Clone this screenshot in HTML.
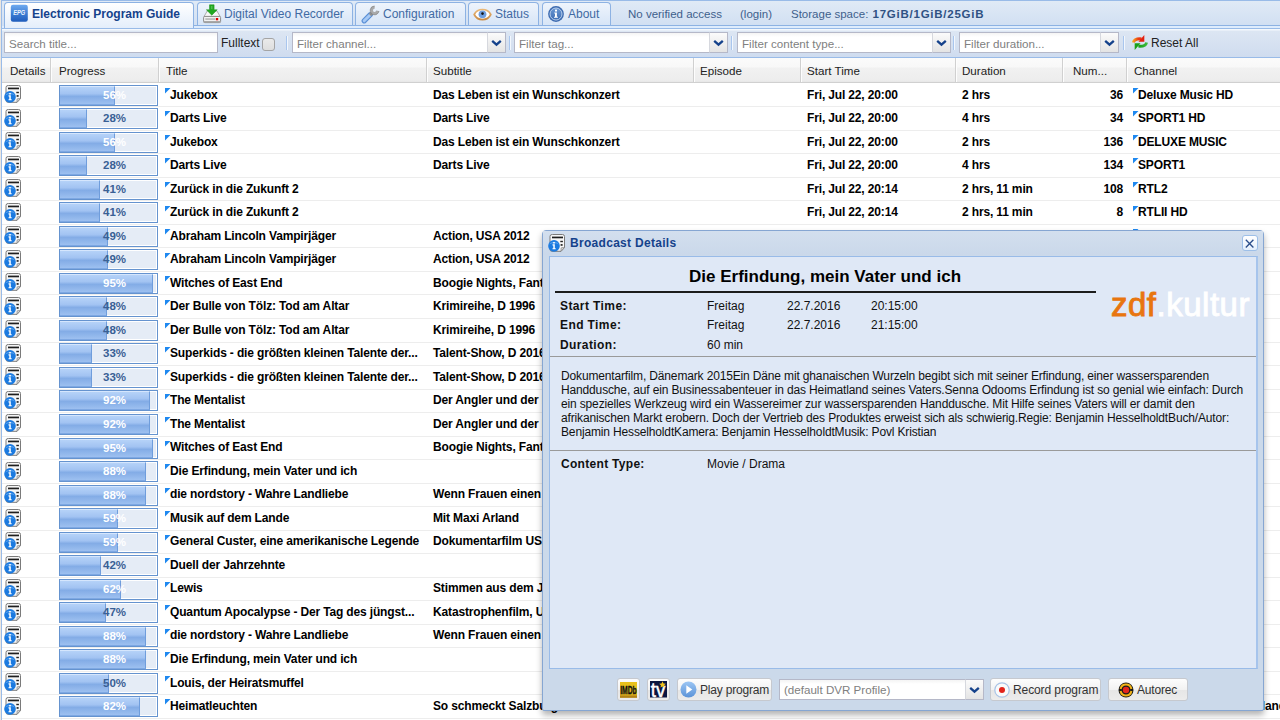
<!DOCTYPE html><html><head><meta charset="utf-8"><style>
*{box-sizing:border-box}
html,body{margin:0;padding:0;width:1280px;height:720px;overflow:hidden;background:#fff;font-family:"Liberation Sans",sans-serif;position:relative}
.a{position:absolute}
.t{position:absolute;white-space:nowrap;line-height:14px}
.tri{position:absolute}
#strip{left:0;top:0;width:1280px;height:29px;background:linear-gradient(#e0eaf6,#cfdef2);border-top:1px solid #99bbe8}
.tab{position:absolute;top:1px;height:23px;border:1px solid #8db2e3;border-bottom:none;border-radius:4px 4px 0 0;background:linear-gradient(#eef4fc,#d7e5f7);color:#416aa3;font-size:12px}
.tab.act{top:1px;height:26px;background:linear-gradient(#ffffff,#e4eefb);color:#15428b;font-weight:bold;z-index:2}
.tab .t{top:4px}
.tab svg{position:absolute}
#tbar{left:0;top:29px;width:1280px;height:29px;background:linear-gradient(#f4f8fd 0,#f4f8fd 1px,#dce6f3 2px,#cfdcef 100%);border-bottom:1px solid #99bbe8}
.fld{position:absolute;top:3px;height:21px;border:1px solid #b5b8c8;background:linear-gradient(#f4f4f4 0,#fff 4px);color:#808080;font-size:12px}
.fld .t{left:4px;top:4px;font-size:11.6px}
.trig{position:absolute;right:-1px;top:-1px;width:19px;height:21px;border:1px solid #b5b8c8;border-left-color:#d6d8de;background:linear-gradient(#fbfbfb,#e4e4e4);}
.trig svg{position:absolute;left:3px;top:6px}
.sep{position:absolute;top:7px;width:2px;height:14px;border-left:1px solid #a9c6ee;border-right:1px solid #f2f7fd}
#hdr{left:0;top:58px;width:1280px;height:25px;background:linear-gradient(#fbfbfb 0,#f8f8f8 9px,#f1f1f1 10px,#ededed 22px,#e6e6e6 24px);border-bottom:1px solid #d0d0d0}
.hs{position:absolute;top:0;width:1px;height:24px;background:#d0d0d0;box-shadow:1px 0 0 #fdfdfd}
.ht{position:absolute;top:10px;font-size:11.6px;color:#222;white-space:nowrap;line-height:14px}
.row{position:absolute;left:2px;width:1278px;border-bottom:1px solid #ededed}
.c{position:absolute;white-space:nowrap;font-size:12px;font-weight:bold;color:#000;line-height:14px;letter-spacing:-.15px}
.pb{position:absolute;left:59px;width:99px;height:21px;border:1px solid #6593cf;background:linear-gradient(#fff,#e6edf6);}
.pb .in{position:absolute;left:0;top:0;bottom:0;right:0;border:1px solid #fff;background:#e5ecf6}
.pb .fill{position:absolute;left:0;top:0;height:19px;background:linear-gradient(#b5d2f8 0,#a2c3f2 40%,#83ace6 55%,#9dc0f0 100%);border-top:1px solid #d5e6fd;border-right:1px solid #6f9ddc;border-bottom:1px solid #7ea8e3}
.pb .pt{position:absolute;left:6px;width:97px;top:2px;text-align:center;font-size:11.5px;font-weight:bold;line-height:14px}
</style></head><body>
<div class="a" style="left:0;top:0;width:1px;height:720px;background:#ebe6e0;z-index:5"></div><div class="a" style="left:1px;top:0;width:1px;height:720px;background:#99bbe8;z-index:5"></div>

<div id="strip" class="a">
<div class="a" style="left:4px;top:24px;width:1276px;height:1px;background:#8db2e3"></div>
<div class="a" style="left:0;top:25px;width:1280px;height:2px;background:#deecfd"></div>
<div class="a" style="left:0;top:27px;width:1280px;height:1px;background:#99bbe8"></div>
<div class="tab act" style="left:4px;width:190px"><svg style="left:5px;top:1px" width="18" height="18" viewBox="0 0 18 18"><defs><linearGradient id="ge" x1="0" y1="0" x2="0" y2="1"><stop offset="0" stop-color="#6eaaf0"/><stop offset=".55" stop-color="#3b7bd2"/><stop offset="1" stop-color="#1f5cbc"/></linearGradient></defs><rect x="0.8" y="0.8" width="17" height="17" rx="2.2" fill="url(#ge)"/><text x="9.3" y="10.6" font-family="Liberation Sans" font-size="6.6" font-weight="bold" font-style="italic" fill="#fff" fill-opacity=".92" text-anchor="middle" textLength="12" lengthAdjust="spacingAndGlyphs">EPG</text></svg><div class="t" style="left:27px">Electronic Program Guide</div></div>
<div class="tab" style="left:197px;width:156px"><svg style="left:5px;top:1px" width="19" height="20" viewBox="0 0 19 20"><path d="M4.3 6.9h9.6l3.3 5.6H1z" fill="#f7f7f7" stroke="#9a9a9a" stroke-width=".8"/><rect x="0.6" y="12.4" width="17" height="6.2" rx="1.2" fill="#f2f2f2" stroke="#8c8c8c" stroke-width="1"/><rect x="0.6" y="17" width="17" height="1.6" fill="#a8a8a8"/><rect x="2.3" y="14.4" width="10" height="1.3" fill="#a9a9a9"/><rect x="12.9" y="14" width="2.3" height="2.3" fill="#e30000"/><path d="M6.5 0.8h4.6v5h3.1L8.8 11.2 3.4 5.8h3.1z" fill="#22a822" stroke="#1a8f1a" stroke-width=".5"/><rect x="8.2" y="2" width="1.2" height="3" fill="#7fd47f" opacity=".6"/></svg><div class="t" style="left:26px">Digital Video Recorder</div></div>
<div class="tab" style="left:355px;width:111px"><svg style="left:5px;top:2px" width="20" height="19" viewBox="0 0 20 19"><path d="M3.2 15.8L9.3 9.7" stroke="#5a8fd6" stroke-width="5.2" stroke-linecap="round"/><path d="M3.2 15.8L9.3 9.7" stroke="#a6c9f5" stroke-width="3" stroke-linecap="round"/><path d="M9 10l2.6-2.6" stroke="#8e8e8e" stroke-width="3.4"/><circle cx="13.6" cy="5.4" r="3" fill="none" stroke="#a9a9a9" stroke-width="2.8" stroke-dasharray="13.4 5.5" transform="rotate(8 13.6 5.4)"/><circle cx="13.6" cy="5.4" r="4.4" fill="none" stroke="#7c7c7c" stroke-width=".6" stroke-dasharray="19.5 8.2" transform="rotate(8 13.6 5.4)"/></svg><div class="t" style="left:27px">Configuration</div></div>
<div class="tab" style="left:468px;width:71px"><svg style="left:4px;top:3px" width="19" height="16" viewBox="0 0 19 16"><defs><linearGradient id="gy" x1="0" y1="0" x2="0" y2="1"><stop offset="0" stop-color="#e9b878"/><stop offset="1" stop-color="#c98b45"/></linearGradient></defs><path d="M1.2 8.5C4.5 1.8 14.5 1.8 17.8 8.5 14.5 15.2 4.5 15.2 1.2 8.5z" fill="#fff" stroke="url(#gy)" stroke-width="1.7"/><circle cx="9.5" cy="8.3" r="3.9" fill="#6f9fdf"/><circle cx="9.5" cy="7.6" r="1.3" fill="#111"/></svg><div class="t" style="left:26px">Status</div></div>
<div class="tab" style="left:542px;width:69px"><svg style="left:4px;top:2px" width="18" height="18" viewBox="0 0 18 18"><defs><linearGradient id="ga" x1="0" y1="0" x2="0" y2="1"><stop offset="0" stop-color="#6a98d4"/><stop offset="1" stop-color="#3f6db2"/></linearGradient></defs><circle cx="9" cy="9" r="7.9" fill="#3d6bb0"/><circle cx="9" cy="9" r="6" fill="url(#ga)" stroke="#c5d8f0" stroke-width=".9"/><rect x="8" y="4.6" width="2" height="1.9" fill="#fff"/><path d="M7.3 7.4h2.6v4.3h1v1.1H7v-1.1h1v-3.2h-.7z" fill="#fff"/></svg><div class="t" style="left:25px">About</div></div>
<div class="t" style="left:628px;top:6px;font-size:11.5px;color:#3e5f8c">No verified access</div>
<div class="t" style="left:740px;top:6px;font-size:11.5px;color:#3e5f8c">(login)</div>
<div class="t" style="left:791px;top:6px;font-size:11.5px;color:#3e5f8c">Storage space: <b style="color:#2f5283;letter-spacing:.75px;margin-left:1px">17GiB/1GiB/25GiB</b></div>
</div>
<div id="tbar" class="a">
<div class="fld" style="left:4px;width:214px"><div class="t">Search title...</div></div>
<div class="t" style="left:221px;top:7px;font-size:12px;color:#222">Fulltext</div>
<div class="a" style="left:262px;top:9px;width:13px;height:13px;border:1px solid #a4a4a4;border-radius:3px;background:linear-gradient(#eaeaea,#dedede)"></div>
<div class="sep" style="left:286px"></div>
<div class="fld" style="left:292px;width:214px;top:3px"><div class="t">Filter channel...</div><div class="trig"><svg width="11" height="8" viewBox="0 0 11 8"><path d="M1.2 1.8l4.3 3.9 4.3-3.9" fill="none" stroke="#15428b" stroke-width="2.3"/></svg></div></div>
<div class="sep" style="left:509px"></div>
<div class="fld" style="left:514px;width:214px;top:3px"><div class="t">Filter tag...</div><div class="trig"><svg width="11" height="8" viewBox="0 0 11 8"><path d="M1.2 1.8l4.3 3.9 4.3-3.9" fill="none" stroke="#15428b" stroke-width="2.3"/></svg></div></div>
<div class="sep" style="left:731px"></div>
<div class="fld" style="left:737px;width:214px;top:3px"><div class="t">Filter content type...</div><div class="trig"><svg width="11" height="8" viewBox="0 0 11 8"><path d="M1.2 1.8l4.3 3.9 4.3-3.9" fill="none" stroke="#15428b" stroke-width="2.3"/></svg></div></div>
<div class="sep" style="left:953px"></div>
<div class="fld" style="left:959px;width:160px;top:3px"><div class="t">Filter duration...</div><div class="trig"><svg width="11" height="8" viewBox="0 0 11 8"><path d="M1.2 1.8l4.3 3.9 4.3-3.9" fill="none" stroke="#15428b" stroke-width="2.3"/></svg></div></div>
<div class="sep" style="left:1123px"></div>
<svg class="a" style="left:1132px;top:5px" width="16" height="17" viewBox="0 0 16 17"><defs><linearGradient id="gr" x1="0" y1="0" x2="1" y2="0"><stop offset="0" stop-color="#f6a020"/><stop offset=".6" stop-color="#ea3a12"/></linearGradient><linearGradient id="gg" x1="0" y1="0" x2="1" y2="0"><stop offset="0" stop-color="#17a017"/><stop offset="1" stop-color="#3cb83c"/></linearGradient></defs><path d="M1.4 8.6Q2.2 4.3 9.6 4.8" fill="none" stroke="url(#gr)" stroke-width="2.8"/><path d="M12.3 1V7.7H6.5z" fill="#e42010"/><path d="M14.6 8.4Q13.8 12.7 6.4 12.2" fill="none" stroke="url(#gg)" stroke-width="2.8"/><path d="M2.7 16V9.3H8.5z" fill="#19a019"/></svg>
<div class="t" style="left:1151px;top:7px;font-size:12px;color:#222">Reset All</div>
</div>
<div id="hdr" class="a">
<div class="hs" style="left:50px"></div>
<div class="hs" style="left:158px"></div>
<div class="hs" style="left:426px"></div>
<div class="hs" style="left:693px"></div>
<div class="hs" style="left:800px"></div>
<div class="hs" style="left:955px"></div>
<div class="hs" style="left:1062px"></div>
<div class="hs" style="left:1126px"></div>
<div class="ht" style="left:10px;top:6px">Details</div>
<div class="ht" style="left:59px;top:6px">Progress</div>
<div class="ht" style="left:166px;top:6px">Title</div>
<div class="ht" style="left:433px;top:6px">Subtitle</div>
<div class="ht" style="left:700px;top:6px">Episode</div>
<div class="ht" style="left:807px;top:6px">Start Time</div>
<div class="ht" style="left:962px;top:6px">Duration</div>
<div class="ht" style="left:1073px;top:6px">Num...</div>
<div class="ht" style="left:1134px;top:6px">Channel</div>
</div>
<div class="a" style="left:2px;top:106px;width:1278px;height:1px;background:#ededed"></div>
<div class="a" style="left:4px;top:85px"><svg width="18" height="18" viewBox="0 0 18 18"><path d="M4.5 0.5h10a2 2 0 0 1 2 2v11l-3.5 3.8h-9a2 2 0 0 1-2-2v-12.8a2 2 0 0 1 2-2z" fill="#f6f6f6" stroke="#7a7a7a"/><path d="M16.5 13.5l-3.5 3.8v-2.6a1.2 1.2 0 0 1 1.2-1.2z" fill="#cfcfcf" stroke="#7a7a7a" stroke-width=".6"/><rect x="4" y="2.6" width="11" height="1.7" fill="#1e1e1e"/><rect x="12.3" y="6.8" width="2.6" height="1.4" fill="#222"/><rect x="12.6" y="10.1" width="2" height="1.7" fill="#222"/><circle cx="6" cy="11.9" r="5.8" fill="#1b7ae0"/><path d="M1.3 10.5a5 4 0 0 1 9.4 0a6 3 0 0 0-9.4 0z" fill="#7ab8f7" opacity=".6"/><rect x="5.2" y="8" width="1.6" height="1.5" fill="#fff"/><path d="M4.5 10.3h2.3v3.9h0.9v1h-3.2v-1h0.8v-2.8h-0.8z" fill="#fff"/></svg></div>
<div class="pb" style="top:85px"><div class="in"></div><div class="fill" style="width:55px"></div><div class="pt" style="color:#fff">56%</div></div>
<svg class="tri" style="left:165px;top:88px" width="6" height="6"><path d="M0 0H5.5L0 5.5Z" fill="#1e88f0"/></svg>
<div class="c" style="left:170px;top:88px">Jukebox</div>
<div class="c" style="left:433px;top:88px">Das Leben ist ein Wunschkonzert</div>
<div class="c" style="left:807px;top:88px">Fri, Jul 22, 20:00</div>
<div class="c" style="left:962px;top:88px">2 hrs</div>
<div class="c" style="right:157px;top:88px">36</div>
<svg class="tri" style="left:1133px;top:88px" width="6" height="6"><path d="M0 0H5.5L0 5.5Z" fill="#1e88f0"/></svg>
<div class="c" style="left:1138px;top:88px">Deluxe Music HD</div>
<div class="a" style="left:2px;top:130px;width:1278px;height:1px;background:#ededed"></div>
<div class="a" style="left:4px;top:109px"><svg width="18" height="18" viewBox="0 0 18 18"><path d="M4.5 0.5h10a2 2 0 0 1 2 2v11l-3.5 3.8h-9a2 2 0 0 1-2-2v-12.8a2 2 0 0 1 2-2z" fill="#f6f6f6" stroke="#7a7a7a"/><path d="M16.5 13.5l-3.5 3.8v-2.6a1.2 1.2 0 0 1 1.2-1.2z" fill="#cfcfcf" stroke="#7a7a7a" stroke-width=".6"/><rect x="4" y="2.6" width="11" height="1.7" fill="#1e1e1e"/><rect x="12.3" y="6.8" width="2.6" height="1.4" fill="#222"/><rect x="12.6" y="10.1" width="2" height="1.7" fill="#222"/><circle cx="6" cy="11.9" r="5.8" fill="#1b7ae0"/><path d="M1.3 10.5a5 4 0 0 1 9.4 0a6 3 0 0 0-9.4 0z" fill="#7ab8f7" opacity=".6"/><rect x="5.2" y="8" width="1.6" height="1.5" fill="#fff"/><path d="M4.5 10.3h2.3v3.9h0.9v1h-3.2v-1h0.8v-2.8h-0.8z" fill="#fff"/></svg></div>
<div class="pb" style="top:108px"><div class="in"></div><div class="fill" style="width:27px"></div><div class="pt" style="color:#396095">28%</div></div>
<svg class="tri" style="left:165px;top:111px" width="6" height="6"><path d="M0 0H5.5L0 5.5Z" fill="#1e88f0"/></svg>
<div class="c" style="left:170px;top:111px">Darts Live</div>
<div class="c" style="left:433px;top:111px">Darts Live</div>
<div class="c" style="left:807px;top:111px">Fri, Jul 22, 20:00</div>
<div class="c" style="left:962px;top:111px">4 hrs</div>
<div class="c" style="right:157px;top:111px">34</div>
<svg class="tri" style="left:1133px;top:111px" width="6" height="6"><path d="M0 0H5.5L0 5.5Z" fill="#1e88f0"/></svg>
<div class="c" style="left:1138px;top:111px">SPORT1 HD</div>
<div class="a" style="left:2px;top:153px;width:1278px;height:1px;background:#ededed"></div>
<div class="a" style="left:4px;top:132px"><svg width="18" height="18" viewBox="0 0 18 18"><path d="M4.5 0.5h10a2 2 0 0 1 2 2v11l-3.5 3.8h-9a2 2 0 0 1-2-2v-12.8a2 2 0 0 1 2-2z" fill="#f6f6f6" stroke="#7a7a7a"/><path d="M16.5 13.5l-3.5 3.8v-2.6a1.2 1.2 0 0 1 1.2-1.2z" fill="#cfcfcf" stroke="#7a7a7a" stroke-width=".6"/><rect x="4" y="2.6" width="11" height="1.7" fill="#1e1e1e"/><rect x="12.3" y="6.8" width="2.6" height="1.4" fill="#222"/><rect x="12.6" y="10.1" width="2" height="1.7" fill="#222"/><circle cx="6" cy="11.9" r="5.8" fill="#1b7ae0"/><path d="M1.3 10.5a5 4 0 0 1 9.4 0a6 3 0 0 0-9.4 0z" fill="#7ab8f7" opacity=".6"/><rect x="5.2" y="8" width="1.6" height="1.5" fill="#fff"/><path d="M4.5 10.3h2.3v3.9h0.9v1h-3.2v-1h0.8v-2.8h-0.8z" fill="#fff"/></svg></div>
<div class="pb" style="top:132px"><div class="in"></div><div class="fill" style="width:55px"></div><div class="pt" style="color:#fff">56%</div></div>
<svg class="tri" style="left:165px;top:135px" width="6" height="6"><path d="M0 0H5.5L0 5.5Z" fill="#1e88f0"/></svg>
<div class="c" style="left:170px;top:135px">Jukebox</div>
<div class="c" style="left:433px;top:135px">Das Leben ist ein Wunschkonzert</div>
<div class="c" style="left:807px;top:135px">Fri, Jul 22, 20:00</div>
<div class="c" style="left:962px;top:135px">2 hrs</div>
<div class="c" style="right:157px;top:135px">136</div>
<svg class="tri" style="left:1133px;top:135px" width="6" height="6"><path d="M0 0H5.5L0 5.5Z" fill="#1e88f0"/></svg>
<div class="c" style="left:1138px;top:135px">DELUXE MUSIC</div>
<div class="a" style="left:2px;top:177px;width:1278px;height:1px;background:#ededed"></div>
<div class="a" style="left:4px;top:156px"><svg width="18" height="18" viewBox="0 0 18 18"><path d="M4.5 0.5h10a2 2 0 0 1 2 2v11l-3.5 3.8h-9a2 2 0 0 1-2-2v-12.8a2 2 0 0 1 2-2z" fill="#f6f6f6" stroke="#7a7a7a"/><path d="M16.5 13.5l-3.5 3.8v-2.6a1.2 1.2 0 0 1 1.2-1.2z" fill="#cfcfcf" stroke="#7a7a7a" stroke-width=".6"/><rect x="4" y="2.6" width="11" height="1.7" fill="#1e1e1e"/><rect x="12.3" y="6.8" width="2.6" height="1.4" fill="#222"/><rect x="12.6" y="10.1" width="2" height="1.7" fill="#222"/><circle cx="6" cy="11.9" r="5.8" fill="#1b7ae0"/><path d="M1.3 10.5a5 4 0 0 1 9.4 0a6 3 0 0 0-9.4 0z" fill="#7ab8f7" opacity=".6"/><rect x="5.2" y="8" width="1.6" height="1.5" fill="#fff"/><path d="M4.5 10.3h2.3v3.9h0.9v1h-3.2v-1h0.8v-2.8h-0.8z" fill="#fff"/></svg></div>
<div class="pb" style="top:155px"><div class="in"></div><div class="fill" style="width:27px"></div><div class="pt" style="color:#396095">28%</div></div>
<svg class="tri" style="left:165px;top:158px" width="6" height="6"><path d="M0 0H5.5L0 5.5Z" fill="#1e88f0"/></svg>
<div class="c" style="left:170px;top:158px">Darts Live</div>
<div class="c" style="left:433px;top:158px">Darts Live</div>
<div class="c" style="left:807px;top:158px">Fri, Jul 22, 20:00</div>
<div class="c" style="left:962px;top:158px">4 hrs</div>
<div class="c" style="right:157px;top:158px">134</div>
<svg class="tri" style="left:1133px;top:158px" width="6" height="6"><path d="M0 0H5.5L0 5.5Z" fill="#1e88f0"/></svg>
<div class="c" style="left:1138px;top:158px">SPORT1</div>
<div class="a" style="left:2px;top:200px;width:1278px;height:1px;background:#ededed"></div>
<div class="a" style="left:4px;top:179px"><svg width="18" height="18" viewBox="0 0 18 18"><path d="M4.5 0.5h10a2 2 0 0 1 2 2v11l-3.5 3.8h-9a2 2 0 0 1-2-2v-12.8a2 2 0 0 1 2-2z" fill="#f6f6f6" stroke="#7a7a7a"/><path d="M16.5 13.5l-3.5 3.8v-2.6a1.2 1.2 0 0 1 1.2-1.2z" fill="#cfcfcf" stroke="#7a7a7a" stroke-width=".6"/><rect x="4" y="2.6" width="11" height="1.7" fill="#1e1e1e"/><rect x="12.3" y="6.8" width="2.6" height="1.4" fill="#222"/><rect x="12.6" y="10.1" width="2" height="1.7" fill="#222"/><circle cx="6" cy="11.9" r="5.8" fill="#1b7ae0"/><path d="M1.3 10.5a5 4 0 0 1 9.4 0a6 3 0 0 0-9.4 0z" fill="#7ab8f7" opacity=".6"/><rect x="5.2" y="8" width="1.6" height="1.5" fill="#fff"/><path d="M4.5 10.3h2.3v3.9h0.9v1h-3.2v-1h0.8v-2.8h-0.8z" fill="#fff"/></svg></div>
<div class="pb" style="top:179px"><div class="in"></div><div class="fill" style="width:40px"></div><div class="pt" style="color:#396095">41%</div></div>
<svg class="tri" style="left:165px;top:182px" width="6" height="6"><path d="M0 0H5.5L0 5.5Z" fill="#1e88f0"/></svg>
<div class="c" style="left:170px;top:182px">Zurück in die Zukunft 2</div>
<div class="c" style="left:807px;top:182px">Fri, Jul 22, 20:14</div>
<div class="c" style="left:962px;top:182px">2 hrs, 11 min</div>
<div class="c" style="right:157px;top:182px">108</div>
<svg class="tri" style="left:1133px;top:182px" width="6" height="6"><path d="M0 0H5.5L0 5.5Z" fill="#1e88f0"/></svg>
<div class="c" style="left:1138px;top:182px">RTL2</div>
<div class="a" style="left:2px;top:224px;width:1278px;height:1px;background:#ededed"></div>
<div class="a" style="left:4px;top:203px"><svg width="18" height="18" viewBox="0 0 18 18"><path d="M4.5 0.5h10a2 2 0 0 1 2 2v11l-3.5 3.8h-9a2 2 0 0 1-2-2v-12.8a2 2 0 0 1 2-2z" fill="#f6f6f6" stroke="#7a7a7a"/><path d="M16.5 13.5l-3.5 3.8v-2.6a1.2 1.2 0 0 1 1.2-1.2z" fill="#cfcfcf" stroke="#7a7a7a" stroke-width=".6"/><rect x="4" y="2.6" width="11" height="1.7" fill="#1e1e1e"/><rect x="12.3" y="6.8" width="2.6" height="1.4" fill="#222"/><rect x="12.6" y="10.1" width="2" height="1.7" fill="#222"/><circle cx="6" cy="11.9" r="5.8" fill="#1b7ae0"/><path d="M1.3 10.5a5 4 0 0 1 9.4 0a6 3 0 0 0-9.4 0z" fill="#7ab8f7" opacity=".6"/><rect x="5.2" y="8" width="1.6" height="1.5" fill="#fff"/><path d="M4.5 10.3h2.3v3.9h0.9v1h-3.2v-1h0.8v-2.8h-0.8z" fill="#fff"/></svg></div>
<div class="pb" style="top:202px"><div class="in"></div><div class="fill" style="width:40px"></div><div class="pt" style="color:#396095">41%</div></div>
<svg class="tri" style="left:165px;top:206px" width="6" height="6"><path d="M0 0H5.5L0 5.5Z" fill="#1e88f0"/></svg>
<div class="c" style="left:170px;top:205px">Zurück in die Zukunft 2</div>
<div class="c" style="left:807px;top:205px">Fri, Jul 22, 20:14</div>
<div class="c" style="left:962px;top:205px">2 hrs, 11 min</div>
<div class="c" style="right:157px;top:205px">8</div>
<svg class="tri" style="left:1133px;top:206px" width="6" height="6"><path d="M0 0H5.5L0 5.5Z" fill="#1e88f0"/></svg>
<div class="c" style="left:1138px;top:205px">RTLII HD</div>
<div class="a" style="left:2px;top:247px;width:1278px;height:1px;background:#ededed"></div>
<div class="a" style="left:4px;top:226px"><svg width="18" height="18" viewBox="0 0 18 18"><path d="M4.5 0.5h10a2 2 0 0 1 2 2v11l-3.5 3.8h-9a2 2 0 0 1-2-2v-12.8a2 2 0 0 1 2-2z" fill="#f6f6f6" stroke="#7a7a7a"/><path d="M16.5 13.5l-3.5 3.8v-2.6a1.2 1.2 0 0 1 1.2-1.2z" fill="#cfcfcf" stroke="#7a7a7a" stroke-width=".6"/><rect x="4" y="2.6" width="11" height="1.7" fill="#1e1e1e"/><rect x="12.3" y="6.8" width="2.6" height="1.4" fill="#222"/><rect x="12.6" y="10.1" width="2" height="1.7" fill="#222"/><circle cx="6" cy="11.9" r="5.8" fill="#1b7ae0"/><path d="M1.3 10.5a5 4 0 0 1 9.4 0a6 3 0 0 0-9.4 0z" fill="#7ab8f7" opacity=".6"/><rect x="5.2" y="8" width="1.6" height="1.5" fill="#fff"/><path d="M4.5 10.3h2.3v3.9h0.9v1h-3.2v-1h0.8v-2.8h-0.8z" fill="#fff"/></svg></div>
<div class="pb" style="top:226px"><div class="in"></div><div class="fill" style="width:48px"></div><div class="pt" style="color:#396095">49%</div></div>
<svg class="tri" style="left:165px;top:229px" width="6" height="6"><path d="M0 0H5.5L0 5.5Z" fill="#1e88f0"/></svg>
<div class="c" style="left:170px;top:229px">Abraham Lincoln Vampirjäger</div>
<div class="c" style="left:433px;top:229px">Action, USA 2012</div>
<div class="c" style="left:807px;top:229px">Fri, Jul 22, 20:15</div>
<div class="c" style="left:962px;top:229px">1 hr, 45 min</div>
<div class="c" style="right:157px;top:229px">115</div>
<svg class="tri" style="left:1133px;top:229px" width="6" height="6"><path d="M0 0H5.5L0 5.5Z" fill="#1e88f0"/></svg>
<div class="c" style="left:1138px;top:229px">kabel eins HD</div>
<div class="a" style="left:2px;top:271px;width:1278px;height:1px;background:#ededed"></div>
<div class="a" style="left:4px;top:250px"><svg width="18" height="18" viewBox="0 0 18 18"><path d="M4.5 0.5h10a2 2 0 0 1 2 2v11l-3.5 3.8h-9a2 2 0 0 1-2-2v-12.8a2 2 0 0 1 2-2z" fill="#f6f6f6" stroke="#7a7a7a"/><path d="M16.5 13.5l-3.5 3.8v-2.6a1.2 1.2 0 0 1 1.2-1.2z" fill="#cfcfcf" stroke="#7a7a7a" stroke-width=".6"/><rect x="4" y="2.6" width="11" height="1.7" fill="#1e1e1e"/><rect x="12.3" y="6.8" width="2.6" height="1.4" fill="#222"/><rect x="12.6" y="10.1" width="2" height="1.7" fill="#222"/><circle cx="6" cy="11.9" r="5.8" fill="#1b7ae0"/><path d="M1.3 10.5a5 4 0 0 1 9.4 0a6 3 0 0 0-9.4 0z" fill="#7ab8f7" opacity=".6"/><rect x="5.2" y="8" width="1.6" height="1.5" fill="#fff"/><path d="M4.5 10.3h2.3v3.9h0.9v1h-3.2v-1h0.8v-2.8h-0.8z" fill="#fff"/></svg></div>
<div class="pb" style="top:249px"><div class="in"></div><div class="fill" style="width:48px"></div><div class="pt" style="color:#396095">49%</div></div>
<svg class="tri" style="left:165px;top:253px" width="6" height="6"><path d="M0 0H5.5L0 5.5Z" fill="#1e88f0"/></svg>
<div class="c" style="left:170px;top:252px">Abraham Lincoln Vampirjäger</div>
<div class="c" style="left:433px;top:252px">Action, USA 2012</div>
<div class="a" style="left:2px;top:294px;width:1278px;height:1px;background:#ededed"></div>
<div class="a" style="left:4px;top:273px"><svg width="18" height="18" viewBox="0 0 18 18"><path d="M4.5 0.5h10a2 2 0 0 1 2 2v11l-3.5 3.8h-9a2 2 0 0 1-2-2v-12.8a2 2 0 0 1 2-2z" fill="#f6f6f6" stroke="#7a7a7a"/><path d="M16.5 13.5l-3.5 3.8v-2.6a1.2 1.2 0 0 1 1.2-1.2z" fill="#cfcfcf" stroke="#7a7a7a" stroke-width=".6"/><rect x="4" y="2.6" width="11" height="1.7" fill="#1e1e1e"/><rect x="12.3" y="6.8" width="2.6" height="1.4" fill="#222"/><rect x="12.6" y="10.1" width="2" height="1.7" fill="#222"/><circle cx="6" cy="11.9" r="5.8" fill="#1b7ae0"/><path d="M1.3 10.5a5 4 0 0 1 9.4 0a6 3 0 0 0-9.4 0z" fill="#7ab8f7" opacity=".6"/><rect x="5.2" y="8" width="1.6" height="1.5" fill="#fff"/><path d="M4.5 10.3h2.3v3.9h0.9v1h-3.2v-1h0.8v-2.8h-0.8z" fill="#fff"/></svg></div>
<div class="pb" style="top:273px"><div class="in"></div><div class="fill" style="width:93px"></div><div class="pt" style="color:#fff">95%</div></div>
<svg class="tri" style="left:165px;top:276px" width="6" height="6"><path d="M0 0H5.5L0 5.5Z" fill="#1e88f0"/></svg>
<div class="c" style="left:170px;top:276px">Witches of East End</div>
<div class="c" style="left:433px;top:276px">Boogie Nights, Fantasyserie</div>
<div class="a" style="left:2px;top:318px;width:1278px;height:1px;background:#ededed"></div>
<div class="a" style="left:4px;top:297px"><svg width="18" height="18" viewBox="0 0 18 18"><path d="M4.5 0.5h10a2 2 0 0 1 2 2v11l-3.5 3.8h-9a2 2 0 0 1-2-2v-12.8a2 2 0 0 1 2-2z" fill="#f6f6f6" stroke="#7a7a7a"/><path d="M16.5 13.5l-3.5 3.8v-2.6a1.2 1.2 0 0 1 1.2-1.2z" fill="#cfcfcf" stroke="#7a7a7a" stroke-width=".6"/><rect x="4" y="2.6" width="11" height="1.7" fill="#1e1e1e"/><rect x="12.3" y="6.8" width="2.6" height="1.4" fill="#222"/><rect x="12.6" y="10.1" width="2" height="1.7" fill="#222"/><circle cx="6" cy="11.9" r="5.8" fill="#1b7ae0"/><path d="M1.3 10.5a5 4 0 0 1 9.4 0a6 3 0 0 0-9.4 0z" fill="#7ab8f7" opacity=".6"/><rect x="5.2" y="8" width="1.6" height="1.5" fill="#fff"/><path d="M4.5 10.3h2.3v3.9h0.9v1h-3.2v-1h0.8v-2.8h-0.8z" fill="#fff"/></svg></div>
<div class="pb" style="top:296px"><div class="in"></div><div class="fill" style="width:47px"></div><div class="pt" style="color:#396095">48%</div></div>
<svg class="tri" style="left:165px;top:300px" width="6" height="6"><path d="M0 0H5.5L0 5.5Z" fill="#1e88f0"/></svg>
<div class="c" style="left:170px;top:299px">Der Bulle von Tölz: Tod am Altar</div>
<div class="c" style="left:433px;top:299px">Krimireihe, D 1996</div>
<div class="a" style="left:2px;top:342px;width:1278px;height:1px;background:#ededed"></div>
<div class="a" style="left:4px;top:320px"><svg width="18" height="18" viewBox="0 0 18 18"><path d="M4.5 0.5h10a2 2 0 0 1 2 2v11l-3.5 3.8h-9a2 2 0 0 1-2-2v-12.8a2 2 0 0 1 2-2z" fill="#f6f6f6" stroke="#7a7a7a"/><path d="M16.5 13.5l-3.5 3.8v-2.6a1.2 1.2 0 0 1 1.2-1.2z" fill="#cfcfcf" stroke="#7a7a7a" stroke-width=".6"/><rect x="4" y="2.6" width="11" height="1.7" fill="#1e1e1e"/><rect x="12.3" y="6.8" width="2.6" height="1.4" fill="#222"/><rect x="12.6" y="10.1" width="2" height="1.7" fill="#222"/><circle cx="6" cy="11.9" r="5.8" fill="#1b7ae0"/><path d="M1.3 10.5a5 4 0 0 1 9.4 0a6 3 0 0 0-9.4 0z" fill="#7ab8f7" opacity=".6"/><rect x="5.2" y="8" width="1.6" height="1.5" fill="#fff"/><path d="M4.5 10.3h2.3v3.9h0.9v1h-3.2v-1h0.8v-2.8h-0.8z" fill="#fff"/></svg></div>
<div class="pb" style="top:320px"><div class="in"></div><div class="fill" style="width:47px"></div><div class="pt" style="color:#396095">48%</div></div>
<svg class="tri" style="left:165px;top:323px" width="6" height="6"><path d="M0 0H5.5L0 5.5Z" fill="#1e88f0"/></svg>
<div class="c" style="left:170px;top:323px">Der Bulle von Tölz: Tod am Altar</div>
<div class="c" style="left:433px;top:323px">Krimireihe, D 1996</div>
<div class="a" style="left:2px;top:365px;width:1278px;height:1px;background:#ededed"></div>
<div class="a" style="left:4px;top:344px"><svg width="18" height="18" viewBox="0 0 18 18"><path d="M4.5 0.5h10a2 2 0 0 1 2 2v11l-3.5 3.8h-9a2 2 0 0 1-2-2v-12.8a2 2 0 0 1 2-2z" fill="#f6f6f6" stroke="#7a7a7a"/><path d="M16.5 13.5l-3.5 3.8v-2.6a1.2 1.2 0 0 1 1.2-1.2z" fill="#cfcfcf" stroke="#7a7a7a" stroke-width=".6"/><rect x="4" y="2.6" width="11" height="1.7" fill="#1e1e1e"/><rect x="12.3" y="6.8" width="2.6" height="1.4" fill="#222"/><rect x="12.6" y="10.1" width="2" height="1.7" fill="#222"/><circle cx="6" cy="11.9" r="5.8" fill="#1b7ae0"/><path d="M1.3 10.5a5 4 0 0 1 9.4 0a6 3 0 0 0-9.4 0z" fill="#7ab8f7" opacity=".6"/><rect x="5.2" y="8" width="1.6" height="1.5" fill="#fff"/><path d="M4.5 10.3h2.3v3.9h0.9v1h-3.2v-1h0.8v-2.8h-0.8z" fill="#fff"/></svg></div>
<div class="pb" style="top:343px"><div class="in"></div><div class="fill" style="width:32px"></div><div class="pt" style="color:#396095">33%</div></div>
<svg class="tri" style="left:165px;top:347px" width="6" height="6"><path d="M0 0H5.5L0 5.5Z" fill="#1e88f0"/></svg>
<div class="c" style="left:170px;top:346px">Superkids - die größten kleinen Talente der...</div>
<div class="c" style="left:433px;top:346px">Talent-Show, D 2016</div>
<div class="a" style="left:2px;top:389px;width:1278px;height:1px;background:#ededed"></div>
<div class="a" style="left:4px;top:367px"><svg width="18" height="18" viewBox="0 0 18 18"><path d="M4.5 0.5h10a2 2 0 0 1 2 2v11l-3.5 3.8h-9a2 2 0 0 1-2-2v-12.8a2 2 0 0 1 2-2z" fill="#f6f6f6" stroke="#7a7a7a"/><path d="M16.5 13.5l-3.5 3.8v-2.6a1.2 1.2 0 0 1 1.2-1.2z" fill="#cfcfcf" stroke="#7a7a7a" stroke-width=".6"/><rect x="4" y="2.6" width="11" height="1.7" fill="#1e1e1e"/><rect x="12.3" y="6.8" width="2.6" height="1.4" fill="#222"/><rect x="12.6" y="10.1" width="2" height="1.7" fill="#222"/><circle cx="6" cy="11.9" r="5.8" fill="#1b7ae0"/><path d="M1.3 10.5a5 4 0 0 1 9.4 0a6 3 0 0 0-9.4 0z" fill="#7ab8f7" opacity=".6"/><rect x="5.2" y="8" width="1.6" height="1.5" fill="#fff"/><path d="M4.5 10.3h2.3v3.9h0.9v1h-3.2v-1h0.8v-2.8h-0.8z" fill="#fff"/></svg></div>
<div class="pb" style="top:367px"><div class="in"></div><div class="fill" style="width:32px"></div><div class="pt" style="color:#396095">33%</div></div>
<svg class="tri" style="left:165px;top:370px" width="6" height="6"><path d="M0 0H5.5L0 5.5Z" fill="#1e88f0"/></svg>
<div class="c" style="left:170px;top:370px">Superkids - die größten kleinen Talente der...</div>
<div class="c" style="left:433px;top:370px">Talent-Show, D 2016</div>
<div class="a" style="left:2px;top:412px;width:1278px;height:1px;background:#ededed"></div>
<div class="a" style="left:4px;top:391px"><svg width="18" height="18" viewBox="0 0 18 18"><path d="M4.5 0.5h10a2 2 0 0 1 2 2v11l-3.5 3.8h-9a2 2 0 0 1-2-2v-12.8a2 2 0 0 1 2-2z" fill="#f6f6f6" stroke="#7a7a7a"/><path d="M16.5 13.5l-3.5 3.8v-2.6a1.2 1.2 0 0 1 1.2-1.2z" fill="#cfcfcf" stroke="#7a7a7a" stroke-width=".6"/><rect x="4" y="2.6" width="11" height="1.7" fill="#1e1e1e"/><rect x="12.3" y="6.8" width="2.6" height="1.4" fill="#222"/><rect x="12.6" y="10.1" width="2" height="1.7" fill="#222"/><circle cx="6" cy="11.9" r="5.8" fill="#1b7ae0"/><path d="M1.3 10.5a5 4 0 0 1 9.4 0a6 3 0 0 0-9.4 0z" fill="#7ab8f7" opacity=".6"/><rect x="5.2" y="8" width="1.6" height="1.5" fill="#fff"/><path d="M4.5 10.3h2.3v3.9h0.9v1h-3.2v-1h0.8v-2.8h-0.8z" fill="#fff"/></svg></div>
<div class="pb" style="top:390px"><div class="in"></div><div class="fill" style="width:90px"></div><div class="pt" style="color:#fff">92%</div></div>
<svg class="tri" style="left:165px;top:394px" width="6" height="6"><path d="M0 0H5.5L0 5.5Z" fill="#1e88f0"/></svg>
<div class="c" style="left:170px;top:393px">The Mentalist</div>
<div class="c" style="left:433px;top:393px">Der Angler und der Fisch</div>
<div class="a" style="left:2px;top:436px;width:1278px;height:1px;background:#ededed"></div>
<div class="a" style="left:4px;top:414px"><svg width="18" height="18" viewBox="0 0 18 18"><path d="M4.5 0.5h10a2 2 0 0 1 2 2v11l-3.5 3.8h-9a2 2 0 0 1-2-2v-12.8a2 2 0 0 1 2-2z" fill="#f6f6f6" stroke="#7a7a7a"/><path d="M16.5 13.5l-3.5 3.8v-2.6a1.2 1.2 0 0 1 1.2-1.2z" fill="#cfcfcf" stroke="#7a7a7a" stroke-width=".6"/><rect x="4" y="2.6" width="11" height="1.7" fill="#1e1e1e"/><rect x="12.3" y="6.8" width="2.6" height="1.4" fill="#222"/><rect x="12.6" y="10.1" width="2" height="1.7" fill="#222"/><circle cx="6" cy="11.9" r="5.8" fill="#1b7ae0"/><path d="M1.3 10.5a5 4 0 0 1 9.4 0a6 3 0 0 0-9.4 0z" fill="#7ab8f7" opacity=".6"/><rect x="5.2" y="8" width="1.6" height="1.5" fill="#fff"/><path d="M4.5 10.3h2.3v3.9h0.9v1h-3.2v-1h0.8v-2.8h-0.8z" fill="#fff"/></svg></div>
<div class="pb" style="top:414px"><div class="in"></div><div class="fill" style="width:90px"></div><div class="pt" style="color:#fff">92%</div></div>
<svg class="tri" style="left:165px;top:417px" width="6" height="6"><path d="M0 0H5.5L0 5.5Z" fill="#1e88f0"/></svg>
<div class="c" style="left:170px;top:417px">The Mentalist</div>
<div class="c" style="left:433px;top:417px">Der Angler und der Fisch</div>
<div class="a" style="left:2px;top:459px;width:1278px;height:1px;background:#ededed"></div>
<div class="a" style="left:4px;top:438px"><svg width="18" height="18" viewBox="0 0 18 18"><path d="M4.5 0.5h10a2 2 0 0 1 2 2v11l-3.5 3.8h-9a2 2 0 0 1-2-2v-12.8a2 2 0 0 1 2-2z" fill="#f6f6f6" stroke="#7a7a7a"/><path d="M16.5 13.5l-3.5 3.8v-2.6a1.2 1.2 0 0 1 1.2-1.2z" fill="#cfcfcf" stroke="#7a7a7a" stroke-width=".6"/><rect x="4" y="2.6" width="11" height="1.7" fill="#1e1e1e"/><rect x="12.3" y="6.8" width="2.6" height="1.4" fill="#222"/><rect x="12.6" y="10.1" width="2" height="1.7" fill="#222"/><circle cx="6" cy="11.9" r="5.8" fill="#1b7ae0"/><path d="M1.3 10.5a5 4 0 0 1 9.4 0a6 3 0 0 0-9.4 0z" fill="#7ab8f7" opacity=".6"/><rect x="5.2" y="8" width="1.6" height="1.5" fill="#fff"/><path d="M4.5 10.3h2.3v3.9h0.9v1h-3.2v-1h0.8v-2.8h-0.8z" fill="#fff"/></svg></div>
<div class="pb" style="top:438px"><div class="in"></div><div class="fill" style="width:93px"></div><div class="pt" style="color:#fff">95%</div></div>
<svg class="tri" style="left:165px;top:441px" width="6" height="6"><path d="M0 0H5.5L0 5.5Z" fill="#1e88f0"/></svg>
<div class="c" style="left:170px;top:440px">Witches of East End</div>
<div class="c" style="left:433px;top:440px">Boogie Nights, Fantasyserie</div>
<div class="a" style="left:2px;top:483px;width:1278px;height:1px;background:#ededed"></div>
<div class="a" style="left:4px;top:462px"><svg width="18" height="18" viewBox="0 0 18 18"><path d="M4.5 0.5h10a2 2 0 0 1 2 2v11l-3.5 3.8h-9a2 2 0 0 1-2-2v-12.8a2 2 0 0 1 2-2z" fill="#f6f6f6" stroke="#7a7a7a"/><path d="M16.5 13.5l-3.5 3.8v-2.6a1.2 1.2 0 0 1 1.2-1.2z" fill="#cfcfcf" stroke="#7a7a7a" stroke-width=".6"/><rect x="4" y="2.6" width="11" height="1.7" fill="#1e1e1e"/><rect x="12.3" y="6.8" width="2.6" height="1.4" fill="#222"/><rect x="12.6" y="10.1" width="2" height="1.7" fill="#222"/><circle cx="6" cy="11.9" r="5.8" fill="#1b7ae0"/><path d="M1.3 10.5a5 4 0 0 1 9.4 0a6 3 0 0 0-9.4 0z" fill="#7ab8f7" opacity=".6"/><rect x="5.2" y="8" width="1.6" height="1.5" fill="#fff"/><path d="M4.5 10.3h2.3v3.9h0.9v1h-3.2v-1h0.8v-2.8h-0.8z" fill="#fff"/></svg></div>
<div class="pb" style="top:461px"><div class="in"></div><div class="fill" style="width:86px"></div><div class="pt" style="color:#fff">88%</div></div>
<svg class="tri" style="left:165px;top:464px" width="6" height="6"><path d="M0 0H5.5L0 5.5Z" fill="#1e88f0"/></svg>
<div class="c" style="left:170px;top:464px">Die Erfindung, mein Vater und ich</div>
<div class="a" style="left:2px;top:506px;width:1278px;height:1px;background:#ededed"></div>
<div class="a" style="left:4px;top:485px"><svg width="18" height="18" viewBox="0 0 18 18"><path d="M4.5 0.5h10a2 2 0 0 1 2 2v11l-3.5 3.8h-9a2 2 0 0 1-2-2v-12.8a2 2 0 0 1 2-2z" fill="#f6f6f6" stroke="#7a7a7a"/><path d="M16.5 13.5l-3.5 3.8v-2.6a1.2 1.2 0 0 1 1.2-1.2z" fill="#cfcfcf" stroke="#7a7a7a" stroke-width=".6"/><rect x="4" y="2.6" width="11" height="1.7" fill="#1e1e1e"/><rect x="12.3" y="6.8" width="2.6" height="1.4" fill="#222"/><rect x="12.6" y="10.1" width="2" height="1.7" fill="#222"/><circle cx="6" cy="11.9" r="5.8" fill="#1b7ae0"/><path d="M1.3 10.5a5 4 0 0 1 9.4 0a6 3 0 0 0-9.4 0z" fill="#7ab8f7" opacity=".6"/><rect x="5.2" y="8" width="1.6" height="1.5" fill="#fff"/><path d="M4.5 10.3h2.3v3.9h0.9v1h-3.2v-1h0.8v-2.8h-0.8z" fill="#fff"/></svg></div>
<div class="pb" style="top:485px"><div class="in"></div><div class="fill" style="width:86px"></div><div class="pt" style="color:#fff">88%</div></div>
<svg class="tri" style="left:165px;top:488px" width="6" height="6"><path d="M0 0H5.5L0 5.5Z" fill="#1e88f0"/></svg>
<div class="c" style="left:170px;top:487px">die nordstory - Wahre Landliebe</div>
<div class="c" style="left:433px;top:487px">Wenn Frauen einen Bauern</div>
<div class="a" style="left:2px;top:530px;width:1278px;height:1px;background:#ededed"></div>
<div class="a" style="left:4px;top:509px"><svg width="18" height="18" viewBox="0 0 18 18"><path d="M4.5 0.5h10a2 2 0 0 1 2 2v11l-3.5 3.8h-9a2 2 0 0 1-2-2v-12.8a2 2 0 0 1 2-2z" fill="#f6f6f6" stroke="#7a7a7a"/><path d="M16.5 13.5l-3.5 3.8v-2.6a1.2 1.2 0 0 1 1.2-1.2z" fill="#cfcfcf" stroke="#7a7a7a" stroke-width=".6"/><rect x="4" y="2.6" width="11" height="1.7" fill="#1e1e1e"/><rect x="12.3" y="6.8" width="2.6" height="1.4" fill="#222"/><rect x="12.6" y="10.1" width="2" height="1.7" fill="#222"/><circle cx="6" cy="11.9" r="5.8" fill="#1b7ae0"/><path d="M1.3 10.5a5 4 0 0 1 9.4 0a6 3 0 0 0-9.4 0z" fill="#7ab8f7" opacity=".6"/><rect x="5.2" y="8" width="1.6" height="1.5" fill="#fff"/><path d="M4.5 10.3h2.3v3.9h0.9v1h-3.2v-1h0.8v-2.8h-0.8z" fill="#fff"/></svg></div>
<div class="pb" style="top:508px"><div class="in"></div><div class="fill" style="width:58px"></div><div class="pt" style="color:#fff">59%</div></div>
<svg class="tri" style="left:165px;top:511px" width="6" height="6"><path d="M0 0H5.5L0 5.5Z" fill="#1e88f0"/></svg>
<div class="c" style="left:170px;top:511px">Musik auf dem Lande</div>
<div class="c" style="left:433px;top:511px">Mit Maxi Arland</div>
<div class="a" style="left:2px;top:553px;width:1278px;height:1px;background:#ededed"></div>
<div class="a" style="left:4px;top:532px"><svg width="18" height="18" viewBox="0 0 18 18"><path d="M4.5 0.5h10a2 2 0 0 1 2 2v11l-3.5 3.8h-9a2 2 0 0 1-2-2v-12.8a2 2 0 0 1 2-2z" fill="#f6f6f6" stroke="#7a7a7a"/><path d="M16.5 13.5l-3.5 3.8v-2.6a1.2 1.2 0 0 1 1.2-1.2z" fill="#cfcfcf" stroke="#7a7a7a" stroke-width=".6"/><rect x="4" y="2.6" width="11" height="1.7" fill="#1e1e1e"/><rect x="12.3" y="6.8" width="2.6" height="1.4" fill="#222"/><rect x="12.6" y="10.1" width="2" height="1.7" fill="#222"/><circle cx="6" cy="11.9" r="5.8" fill="#1b7ae0"/><path d="M1.3 10.5a5 4 0 0 1 9.4 0a6 3 0 0 0-9.4 0z" fill="#7ab8f7" opacity=".6"/><rect x="5.2" y="8" width="1.6" height="1.5" fill="#fff"/><path d="M4.5 10.3h2.3v3.9h0.9v1h-3.2v-1h0.8v-2.8h-0.8z" fill="#fff"/></svg></div>
<div class="pb" style="top:532px"><div class="in"></div><div class="fill" style="width:58px"></div><div class="pt" style="color:#fff">59%</div></div>
<svg class="tri" style="left:165px;top:535px" width="6" height="6"><path d="M0 0H5.5L0 5.5Z" fill="#1e88f0"/></svg>
<div class="c" style="left:170px;top:534px">General Custer, eine amerikanische Legende</div>
<div class="c" style="left:433px;top:534px">Dokumentarfilm USA 2012</div>
<div class="a" style="left:2px;top:577px;width:1278px;height:1px;background:#ededed"></div>
<div class="a" style="left:4px;top:556px"><svg width="18" height="18" viewBox="0 0 18 18"><path d="M4.5 0.5h10a2 2 0 0 1 2 2v11l-3.5 3.8h-9a2 2 0 0 1-2-2v-12.8a2 2 0 0 1 2-2z" fill="#f6f6f6" stroke="#7a7a7a"/><path d="M16.5 13.5l-3.5 3.8v-2.6a1.2 1.2 0 0 1 1.2-1.2z" fill="#cfcfcf" stroke="#7a7a7a" stroke-width=".6"/><rect x="4" y="2.6" width="11" height="1.7" fill="#1e1e1e"/><rect x="12.3" y="6.8" width="2.6" height="1.4" fill="#222"/><rect x="12.6" y="10.1" width="2" height="1.7" fill="#222"/><circle cx="6" cy="11.9" r="5.8" fill="#1b7ae0"/><path d="M1.3 10.5a5 4 0 0 1 9.4 0a6 3 0 0 0-9.4 0z" fill="#7ab8f7" opacity=".6"/><rect x="5.2" y="8" width="1.6" height="1.5" fill="#fff"/><path d="M4.5 10.3h2.3v3.9h0.9v1h-3.2v-1h0.8v-2.8h-0.8z" fill="#fff"/></svg></div>
<div class="pb" style="top:555px"><div class="in"></div><div class="fill" style="width:41px"></div><div class="pt" style="color:#396095">42%</div></div>
<svg class="tri" style="left:165px;top:558px" width="6" height="6"><path d="M0 0H5.5L0 5.5Z" fill="#1e88f0"/></svg>
<div class="c" style="left:170px;top:558px">Duell der Jahrzehnte</div>
<div class="a" style="left:2px;top:600px;width:1278px;height:1px;background:#ededed"></div>
<div class="a" style="left:4px;top:579px"><svg width="18" height="18" viewBox="0 0 18 18"><path d="M4.5 0.5h10a2 2 0 0 1 2 2v11l-3.5 3.8h-9a2 2 0 0 1-2-2v-12.8a2 2 0 0 1 2-2z" fill="#f6f6f6" stroke="#7a7a7a"/><path d="M16.5 13.5l-3.5 3.8v-2.6a1.2 1.2 0 0 1 1.2-1.2z" fill="#cfcfcf" stroke="#7a7a7a" stroke-width=".6"/><rect x="4" y="2.6" width="11" height="1.7" fill="#1e1e1e"/><rect x="12.3" y="6.8" width="2.6" height="1.4" fill="#222"/><rect x="12.6" y="10.1" width="2" height="1.7" fill="#222"/><circle cx="6" cy="11.9" r="5.8" fill="#1b7ae0"/><path d="M1.3 10.5a5 4 0 0 1 9.4 0a6 3 0 0 0-9.4 0z" fill="#7ab8f7" opacity=".6"/><rect x="5.2" y="8" width="1.6" height="1.5" fill="#fff"/><path d="M4.5 10.3h2.3v3.9h0.9v1h-3.2v-1h0.8v-2.8h-0.8z" fill="#fff"/></svg></div>
<div class="pb" style="top:579px"><div class="in"></div><div class="fill" style="width:61px"></div><div class="pt" style="color:#fff">62%</div></div>
<svg class="tri" style="left:165px;top:582px" width="6" height="6"><path d="M0 0H5.5L0 5.5Z" fill="#1e88f0"/></svg>
<div class="c" style="left:170px;top:581px">Lewis</div>
<div class="c" style="left:433px;top:581px">Stimmen aus dem Jenseits</div>
<div class="a" style="left:2px;top:624px;width:1278px;height:1px;background:#ededed"></div>
<div class="a" style="left:4px;top:603px"><svg width="18" height="18" viewBox="0 0 18 18"><path d="M4.5 0.5h10a2 2 0 0 1 2 2v11l-3.5 3.8h-9a2 2 0 0 1-2-2v-12.8a2 2 0 0 1 2-2z" fill="#f6f6f6" stroke="#7a7a7a"/><path d="M16.5 13.5l-3.5 3.8v-2.6a1.2 1.2 0 0 1 1.2-1.2z" fill="#cfcfcf" stroke="#7a7a7a" stroke-width=".6"/><rect x="4" y="2.6" width="11" height="1.7" fill="#1e1e1e"/><rect x="12.3" y="6.8" width="2.6" height="1.4" fill="#222"/><rect x="12.6" y="10.1" width="2" height="1.7" fill="#222"/><circle cx="6" cy="11.9" r="5.8" fill="#1b7ae0"/><path d="M1.3 10.5a5 4 0 0 1 9.4 0a6 3 0 0 0-9.4 0z" fill="#7ab8f7" opacity=".6"/><rect x="5.2" y="8" width="1.6" height="1.5" fill="#fff"/><path d="M4.5 10.3h2.3v3.9h0.9v1h-3.2v-1h0.8v-2.8h-0.8z" fill="#fff"/></svg></div>
<div class="pb" style="top:602px"><div class="in"></div><div class="fill" style="width:46px"></div><div class="pt" style="color:#396095">47%</div></div>
<svg class="tri" style="left:165px;top:605px" width="6" height="6"><path d="M0 0H5.5L0 5.5Z" fill="#1e88f0"/></svg>
<div class="c" style="left:170px;top:605px">Quantum Apocalypse - Der Tag des jüngst...</div>
<div class="c" style="left:433px;top:605px">Katastrophenfilm, USA</div>
<div class="a" style="left:2px;top:647px;width:1278px;height:1px;background:#ededed"></div>
<div class="a" style="left:4px;top:626px"><svg width="18" height="18" viewBox="0 0 18 18"><path d="M4.5 0.5h10a2 2 0 0 1 2 2v11l-3.5 3.8h-9a2 2 0 0 1-2-2v-12.8a2 2 0 0 1 2-2z" fill="#f6f6f6" stroke="#7a7a7a"/><path d="M16.5 13.5l-3.5 3.8v-2.6a1.2 1.2 0 0 1 1.2-1.2z" fill="#cfcfcf" stroke="#7a7a7a" stroke-width=".6"/><rect x="4" y="2.6" width="11" height="1.7" fill="#1e1e1e"/><rect x="12.3" y="6.8" width="2.6" height="1.4" fill="#222"/><rect x="12.6" y="10.1" width="2" height="1.7" fill="#222"/><circle cx="6" cy="11.9" r="5.8" fill="#1b7ae0"/><path d="M1.3 10.5a5 4 0 0 1 9.4 0a6 3 0 0 0-9.4 0z" fill="#7ab8f7" opacity=".6"/><rect x="5.2" y="8" width="1.6" height="1.5" fill="#fff"/><path d="M4.5 10.3h2.3v3.9h0.9v1h-3.2v-1h0.8v-2.8h-0.8z" fill="#fff"/></svg></div>
<div class="pb" style="top:626px"><div class="in"></div><div class="fill" style="width:86px"></div><div class="pt" style="color:#fff">88%</div></div>
<svg class="tri" style="left:165px;top:629px" width="6" height="6"><path d="M0 0H5.5L0 5.5Z" fill="#1e88f0"/></svg>
<div class="c" style="left:170px;top:628px">die nordstory - Wahre Landliebe</div>
<div class="c" style="left:433px;top:628px">Wenn Frauen einen Bauern</div>
<div class="a" style="left:2px;top:671px;width:1278px;height:1px;background:#ededed"></div>
<div class="a" style="left:4px;top:650px"><svg width="18" height="18" viewBox="0 0 18 18"><path d="M4.5 0.5h10a2 2 0 0 1 2 2v11l-3.5 3.8h-9a2 2 0 0 1-2-2v-12.8a2 2 0 0 1 2-2z" fill="#f6f6f6" stroke="#7a7a7a"/><path d="M16.5 13.5l-3.5 3.8v-2.6a1.2 1.2 0 0 1 1.2-1.2z" fill="#cfcfcf" stroke="#7a7a7a" stroke-width=".6"/><rect x="4" y="2.6" width="11" height="1.7" fill="#1e1e1e"/><rect x="12.3" y="6.8" width="2.6" height="1.4" fill="#222"/><rect x="12.6" y="10.1" width="2" height="1.7" fill="#222"/><circle cx="6" cy="11.9" r="5.8" fill="#1b7ae0"/><path d="M1.3 10.5a5 4 0 0 1 9.4 0a6 3 0 0 0-9.4 0z" fill="#7ab8f7" opacity=".6"/><rect x="5.2" y="8" width="1.6" height="1.5" fill="#fff"/><path d="M4.5 10.3h2.3v3.9h0.9v1h-3.2v-1h0.8v-2.8h-0.8z" fill="#fff"/></svg></div>
<div class="pb" style="top:649px"><div class="in"></div><div class="fill" style="width:86px"></div><div class="pt" style="color:#fff">88%</div></div>
<svg class="tri" style="left:165px;top:652px" width="6" height="6"><path d="M0 0H5.5L0 5.5Z" fill="#1e88f0"/></svg>
<div class="c" style="left:170px;top:652px">Die Erfindung, mein Vater und ich</div>
<div class="a" style="left:2px;top:694px;width:1278px;height:1px;background:#ededed"></div>
<div class="a" style="left:4px;top:673px"><svg width="18" height="18" viewBox="0 0 18 18"><path d="M4.5 0.5h10a2 2 0 0 1 2 2v11l-3.5 3.8h-9a2 2 0 0 1-2-2v-12.8a2 2 0 0 1 2-2z" fill="#f6f6f6" stroke="#7a7a7a"/><path d="M16.5 13.5l-3.5 3.8v-2.6a1.2 1.2 0 0 1 1.2-1.2z" fill="#cfcfcf" stroke="#7a7a7a" stroke-width=".6"/><rect x="4" y="2.6" width="11" height="1.7" fill="#1e1e1e"/><rect x="12.3" y="6.8" width="2.6" height="1.4" fill="#222"/><rect x="12.6" y="10.1" width="2" height="1.7" fill="#222"/><circle cx="6" cy="11.9" r="5.8" fill="#1b7ae0"/><path d="M1.3 10.5a5 4 0 0 1 9.4 0a6 3 0 0 0-9.4 0z" fill="#7ab8f7" opacity=".6"/><rect x="5.2" y="8" width="1.6" height="1.5" fill="#fff"/><path d="M4.5 10.3h2.3v3.9h0.9v1h-3.2v-1h0.8v-2.8h-0.8z" fill="#fff"/></svg></div>
<div class="pb" style="top:673px"><div class="in"></div><div class="fill" style="width:49px"></div><div class="pt" style="color:#396095">50%</div></div>
<svg class="tri" style="left:165px;top:676px" width="6" height="6"><path d="M0 0H5.5L0 5.5Z" fill="#1e88f0"/></svg>
<div class="c" style="left:170px;top:676px">Louis, der Heiratsmuffel</div>
<div class="a" style="left:2px;top:718px;width:1278px;height:1px;background:#ededed"></div>
<div class="a" style="left:4px;top:697px"><svg width="18" height="18" viewBox="0 0 18 18"><path d="M4.5 0.5h10a2 2 0 0 1 2 2v11l-3.5 3.8h-9a2 2 0 0 1-2-2v-12.8a2 2 0 0 1 2-2z" fill="#f6f6f6" stroke="#7a7a7a"/><path d="M16.5 13.5l-3.5 3.8v-2.6a1.2 1.2 0 0 1 1.2-1.2z" fill="#cfcfcf" stroke="#7a7a7a" stroke-width=".6"/><rect x="4" y="2.6" width="11" height="1.7" fill="#1e1e1e"/><rect x="12.3" y="6.8" width="2.6" height="1.4" fill="#222"/><rect x="12.6" y="10.1" width="2" height="1.7" fill="#222"/><circle cx="6" cy="11.9" r="5.8" fill="#1b7ae0"/><path d="M1.3 10.5a5 4 0 0 1 9.4 0a6 3 0 0 0-9.4 0z" fill="#7ab8f7" opacity=".6"/><rect x="5.2" y="8" width="1.6" height="1.5" fill="#fff"/><path d="M4.5 10.3h2.3v3.9h0.9v1h-3.2v-1h0.8v-2.8h-0.8z" fill="#fff"/></svg></div>
<div class="pb" style="top:696px"><div class="in"></div><div class="fill" style="width:80px"></div><div class="pt" style="color:#fff">82%</div></div>
<svg class="tri" style="left:165px;top:699px" width="6" height="6"><path d="M0 0H5.5L0 5.5Z" fill="#1e88f0"/></svg>
<div class="c" style="left:170px;top:699px">Heimatleuchten</div>
<div class="c" style="left:433px;top:699px">So schmeckt Salzburg</div>
<svg class="tri" style="left:1133px;top:699px" width="6" height="6"><path d="M0 0H5.5L0 5.5Z" fill="#1e88f0"/></svg>
<div class="c" style="left:1138px;top:699px">ServusTV HD Deutschland</div>
<div class="a" style="left:2px;top:741px;width:1278px;height:1px;background:#ededed"></div>
<div class="a" style="left:4px;top:720px"><svg width="18" height="18" viewBox="0 0 18 18"><path d="M4.5 0.5h10a2 2 0 0 1 2 2v11l-3.5 3.8h-9a2 2 0 0 1-2-2v-12.8a2 2 0 0 1 2-2z" fill="#f6f6f6" stroke="#7a7a7a"/><path d="M16.5 13.5l-3.5 3.8v-2.6a1.2 1.2 0 0 1 1.2-1.2z" fill="#cfcfcf" stroke="#7a7a7a" stroke-width=".6"/><rect x="4" y="2.6" width="11" height="1.7" fill="#1e1e1e"/><rect x="12.3" y="6.8" width="2.6" height="1.4" fill="#222"/><rect x="12.6" y="10.1" width="2" height="1.7" fill="#222"/><circle cx="6" cy="11.9" r="5.8" fill="#1b7ae0"/><path d="M1.3 10.5a5 4 0 0 1 9.4 0a6 3 0 0 0-9.4 0z" fill="#7ab8f7" opacity=".6"/><rect x="5.2" y="8" width="1.6" height="1.5" fill="#fff"/><path d="M4.5 10.3h2.3v3.9h0.9v1h-3.2v-1h0.8v-2.8h-0.8z" fill="#fff"/></svg></div>
<div class="pb" style="top:720px"><div class="in"></div><div class="fill" style="width:69px"></div><div class="pt" style="color:#fff">70%</div></div>
<div id="dlg" class="a" style="left:542px;top:230px;width:722px;height:481px;border:1px solid #86a6d2;border-radius:4px 4px 2px 2px;background:#cbd9ea;box-shadow:0 4px 6px rgba(0,0,0,.3);z-index:10">
<div class="a" style="left:0;top:0;width:720px;height:24px;background:linear-gradient(#d3dfee,#cad8ea)"></div>
<div class="a" style="left:5px;top:3px"><svg width="18" height="18" viewBox="0 0 18 18"><path d="M4.5 0.5h10a2 2 0 0 1 2 2v11l-3.5 3.8h-9a2 2 0 0 1-2-2v-12.8a2 2 0 0 1 2-2z" fill="#f6f6f6" stroke="#7a7a7a"/><path d="M16.5 13.5l-3.5 3.8v-2.6a1.2 1.2 0 0 1 1.2-1.2z" fill="#cfcfcf" stroke="#7a7a7a" stroke-width=".6"/><rect x="4" y="2.6" width="11" height="1.7" fill="#1e1e1e"/><rect x="12.3" y="6.8" width="2.6" height="1.4" fill="#222"/><rect x="12.6" y="10.1" width="2" height="1.7" fill="#222"/><circle cx="6" cy="11.9" r="5.8" fill="#1b7ae0"/><path d="M1.3 10.5a5 4 0 0 1 9.4 0a6 3 0 0 0-9.4 0z" fill="#7ab8f7" opacity=".6"/><rect x="5.2" y="8" width="1.6" height="1.5" fill="#fff"/><path d="M4.5 10.3h2.3v3.9h0.9v1h-3.2v-1h0.8v-2.8h-0.8z" fill="#fff"/></svg></div>
<div class="t" style="left:27px;top:5px;font-size:12px;font-weight:bold;color:#15428b;letter-spacing:.3px">Broadcast Details</div>
<div class="a" style="left:699px;top:4px;width:16px;height:16px;border:1px solid #9dbfe8;border-radius:3px;background:linear-gradient(#fff,#e4effc)"><svg class="a" style="left:1px;top:2px" width="11" height="11" viewBox="0 0 11 11"><path d="M1.8 1.8l7.6 7.6M9.4 1.8l-7.6 7.6" stroke="#2a4d8a" stroke-width="1.35"/></svg></div>
<div class="a" style="left:6px;top:25px;width:709px;height:413px;border:1px solid #99bbe8;border-right:2px solid #a6c4ec;background:#dfe8f6">
<div class="t" style="left:139px;top:11px;font-size:17px;font-weight:bold;color:#000;line-height:18px">Die Erfindung, mein Vater und ich</div>
<div class="a" style="left:5px;top:34px;width:541px;height:2px;background:#1c1c1c"></div>
<div class="t" style="left:561px;top:30px;font-size:33px;line-height:36px;color:#fff;letter-spacing:.5px;-webkit-text-stroke:.9px #fff"><span style="color:#e8750f;-webkit-text-stroke:.9px #e8750f">zdf</span>.kultur</div>
<div class="t" style="left:10px;top:42px;font-size:12px;font-weight:bold;color:#111;letter-spacing:.4px">Start Time:</div>
<div class="t" style="left:157px;top:42px;font-size:12px;color:#111">Freitag</div>
<div class="t" style="left:237px;top:42px;font-size:12px;color:#111">22.7.2016</div>
<div class="t" style="left:321px;top:42px;font-size:12px;color:#111">20:15:00</div>
<div class="t" style="left:10px;top:61.30000000000001px;font-size:12px;font-weight:bold;color:#111;letter-spacing:.4px">End Time:</div>
<div class="t" style="left:157px;top:61.30000000000001px;font-size:12px;color:#111">Freitag</div>
<div class="t" style="left:237px;top:61.30000000000001px;font-size:12px;color:#111">22.7.2016</div>
<div class="t" style="left:321px;top:61.30000000000001px;font-size:12px;color:#111">21:15:00</div>
<div class="t" style="left:10px;top:81px;font-size:12px;font-weight:bold;color:#111;letter-spacing:.4px">Duration:</div>
<div class="t" style="left:157px;top:81px;font-size:12px;color:#111">60 min</div>
<div class="a" style="left:0;top:99px;width:706px;height:1px;background:#9a9a9a"></div>
<div class="t" style="left:11px;top:112.19999999999999px;font-size:12px;color:#111;letter-spacing:-.15px">Dokumentarfilm, Dänemark 2015Ein Däne mit ghanaischen Wurzeln begibt sich mit seiner Erfindung, einer wassersparenden</div>
<div class="t" style="left:11px;top:126.07999999999998px;font-size:12px;color:#111;letter-spacing:-.15px">Handdusche, auf ein Businessabenteuer in das Heimatland seines Vaters.Senna Odooms Erfindung ist so genial wie einfach: Durch</div>
<div class="t" style="left:11px;top:139.95999999999998px;font-size:12px;color:#111;letter-spacing:-.15px">ein spezielles Werkzeug wird ein Wassereimer zur wassersparenden Handdusche. Mit Hilfe seines Vaters will er damit den</div>
<div class="t" style="left:11px;top:153.83999999999997px;font-size:12px;color:#111;letter-spacing:-.15px">afrikanischen Markt erobern. Doch der Vertrieb des Produktes erweist sich als schwierig.Regie: Benjamin HesselholdtBuch/Autor:</div>
<div class="t" style="left:11px;top:167.71999999999997px;font-size:12px;color:#111;letter-spacing:-.15px">Benjamin HesselholdtKamera: Benjamin HesselholdtMusik: Povl Kristian</div>
<div class="a" style="left:0;top:193px;width:706px;height:1px;background:#9a9a9a"></div>
<div class="t" style="left:11px;top:200px;font-size:12px;font-weight:bold;color:#111;letter-spacing:.3px">Content Type:</div>
<div class="t" style="left:157px;top:200px;font-size:12px;color:#111">Movie / Drama</div>
</div>
<div class="a" style="left:74px;top:447px;width:23px;height:23px;border:1px solid #c6c9cf;border-radius:3px;background:linear-gradient(#fdfdfd 0,#f2f2f2 50%,#e6e6e6 55%,#ececec 100%)"><svg class="a" style="left:2px;top:3px" width="17" height="16" viewBox="0 0 17 16"><rect x="0" y="0" width="17" height="15.5" fill="#e8c01c"/><rect x="0" y="12.5" width="17" height="3" fill="#c99a18"/><rect x="0" y="14.5" width="17" height="1" fill="#9a6a10"/><text x="8.5" y="11.8" font-family="Liberation Sans" font-size="10.5" font-weight="bold" fill="#111" stroke="#111" stroke-width=".35" text-anchor="middle" textLength="16.5" lengthAdjust="spacingAndGlyphs">IMDb</text></svg></div>
<div class="a" style="left:104px;top:447px;width:23px;height:23px;border:1px solid #c6c9cf;border-radius:3px;background:linear-gradient(#fdfdfd 0,#f2f2f2 50%,#e6e6e6 55%,#ececec 100%)"><svg class="a" style="left:2px;top:2px" width="17" height="17" viewBox="0 0 17 17"><rect width="17" height="16.5" fill="#0a1540"/><text x="8" y="16.3" font-family="Liberation Sans" font-size="20" fill="#fff" stroke="#fff" stroke-width=".5" text-anchor="middle" textLength="14.5" lengthAdjust="spacingAndGlyphs">tv</text><path d="M12.5 0.3l1 2.1 2.3.3-1.7 1.6.4 2.3-2-1.1-2 1.1.4-2.3-1.7-1.6 2.3-.3z" fill="#f1c21c"/></svg></div>
<div class="a" style="left:134px;top:447px;width:95px;height:23px;border:1px solid #c6c9cf;border-radius:3px;background:linear-gradient(#fdfdfd 0,#f2f2f2 50%,#e6e6e6 55%,#ececec 100%)"><svg class="a" style="left:2px;top:2px" width="17" height="17" viewBox="0 0 17 17"><defs><linearGradient id="gp" x1="0" y1="0" x2="0" y2="1"><stop offset="0" stop-color="#9cc6f4"/><stop offset="1" stop-color="#5b93d8"/></linearGradient></defs><circle cx="8.5" cy="8.5" r="8" fill="url(#gp)"/><path d="M6.3 4.3l6 4.2-6 4.2z" fill="#fff"/></svg><div class="t" style="left:22px;top:4px;font-size:12px;color:#333;letter-spacing:-.2px">Play program</div></div>
<div class="fld" style="left:236px;top:448px;width:205px;height:21px"><div class="t" style="top:3px">(default DVR Profile)</div><div class="trig" style="height:21px"><svg width="11" height="8" viewBox="0 0 11 8"><path d="M1.2 1.8l4.3 3.9 4.3-3.9" fill="none" stroke="#15428b" stroke-width="2.3"/></svg></div></div>
<div class="a" style="left:447px;top:447px;width:111px;height:23px;border:1px solid #c6c9cf;border-radius:3px;background:linear-gradient(#fdfdfd 0,#f2f2f2 50%,#e6e6e6 55%,#ececec 100%)"><svg class="a" style="left:3px;top:3px" width="16" height="16" viewBox="0 0 16 16"><circle cx="8" cy="8" r="7.2" fill="#fafafa" stroke="#a9c3e6" stroke-width="1.2"/><circle cx="8" cy="8" r="3" fill="#e2231a"/></svg><div class="t" style="left:22px;top:4px;font-size:12px;color:#333;letter-spacing:-.1px">Record program</div></div>
<div class="a" style="left:565px;top:447px;width:80px;height:23px;border:1px solid #c6c9cf;border-radius:3px;background:linear-gradient(#fdfdfd 0,#f2f2f2 50%,#e6e6e6 55%,#ececec 100%)"><svg class="a" style="left:9px;top:3px" width="16" height="16" viewBox="0 0 16 16"><circle cx="8" cy="8" r="7.5" fill="#1a1a1a"/><path d="M2.6 7a5.5 5.5 0 0 1 10.8 0" fill="none" stroke="#f2b317" stroke-width="2"/><path d="M13.4 9a5.5 5.5 0 0 1-10.8 0" fill="none" stroke="#f2b317" stroke-width="2"/><circle cx="8" cy="8" r="3.2" fill="#e4261c"/></svg><div class="t" style="left:28px;top:4px;font-size:12px;color:#333;letter-spacing:-.2px">Autorec</div></div>
</div>
</body></html>
